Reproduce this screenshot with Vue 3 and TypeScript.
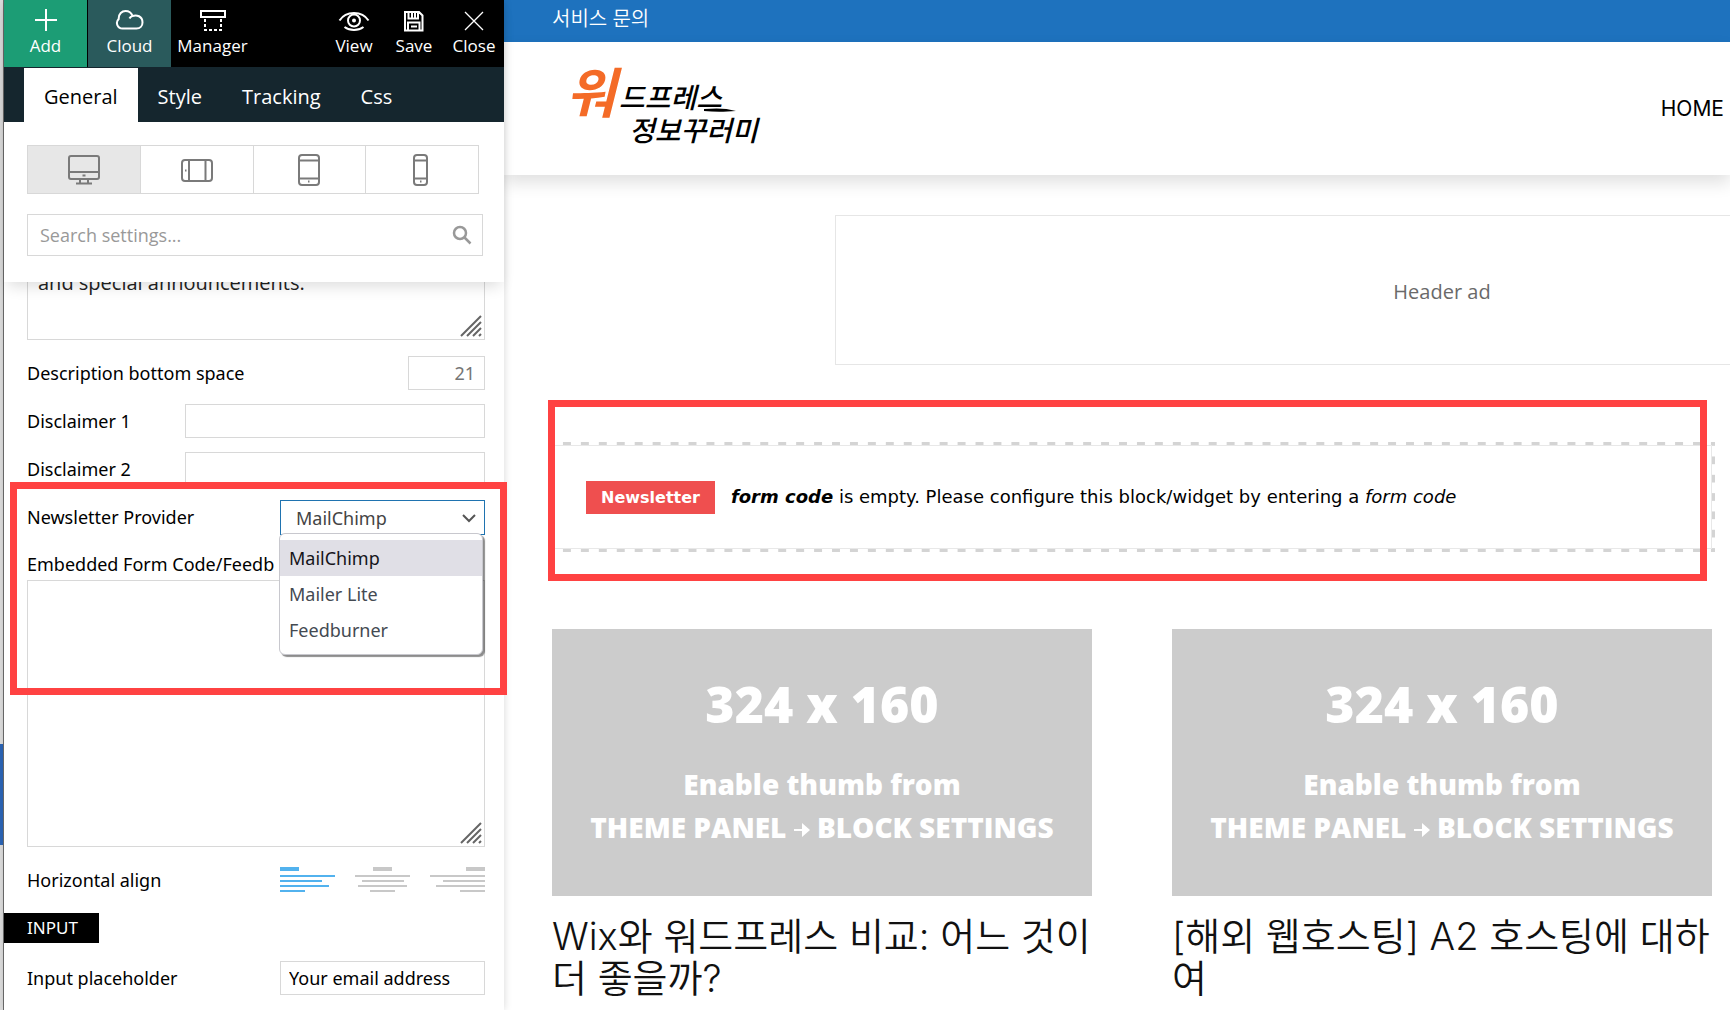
<script setup lang="ts">
import { ref } from 'vue'

const tabs = ['General', 'Style', 'Tracking', 'Css']
const activeTab = ref('General')

const devices = ['Desktop', 'Tablet landscape', 'Tablet portrait', 'Phone']
const activeDevice = ref('Desktop')

const providers = ['MailChimp', 'Mailer Lite', 'Feedburner']
const provider = ref('MailChimp')

const alignments = ['left', 'center', 'right']
const align = ref('left')
const alignWidths = [19, 55, 42, 49, 25]
const alignTops = [0, 8, 13, 18, 23]

function barX(side: string, width: number): number {
  if (side === 'left') return 0
  return side === 'right' ? 55 - width : Math.round((55 - width) / 2)
}

const description = ref('and special announcements.')
const formCode = ref('')
const search = ref('')
const disclaimer1 = ref('')
const disclaimer2 = ref('')
const placeholderText = ref('Your email address')

const posts: string[] = [
  'Wix와 워드프레스 비교: 어느 것이 더 좋을까?',
  '[해외 웹호스팅] A2 호스팅에 대하여',
]
</script>

<template>
  <div class="screen">
    <div class="edge"></div>

    <aside class="panel">
      <div class="panel-head">
        <div class="toolbar">
          <button type="button" class="tool wide add">
            <svg width="24" height="24" viewBox="0 0 24 24"><path d="M12 1v22M1 12h22" /></svg>
            <span>Add</span>
          </button>
          <button type="button" class="tool wide cloud">
            <svg width="30" height="24" viewBox="0 0 30 24">
              <path d="M7.500 20.500a5.500 5.500 0 0 1-3.800-9.500C3.500 5.500 7 3 10.500 3c3.500 0 6 2 7 5 4-1.500 10 0 10 6.500 0 3.500-2.500 6-6 6zM17.500 8c-1.500.5-2.500 1.300-3 2.500" />
            </svg>
            <span>Cloud</span>
          </button>
          <button type="button" class="tool wide">
            <svg width="28" height="24" viewBox="0 0 28 24">
              <path d="M2 3h24v6H2z" />
              <path d="M6 11v11h16V11" stroke-dasharray="3 2" />
            </svg>
            <span>Manager</span>
          </button>
          <div class="tool-group">
            <button type="button" class="tool">
              <svg width="32" height="24" viewBox="0 0 32 24">
                <path d="M1.500 12.500C8 2.500 24 2.500 30.500 12.500M6.500 19c5.500 4 13.500 4 19 0" />
                <circle cx="16" cy="12.500" r="6" />
                <circle cx="16" cy="12.500" r="2" fill="#fff" stroke="none" />
              </svg>
              <span>View</span>
            </button>
            <button type="button" class="tool">
              <svg width="22" height="24" viewBox="0 0 22 24">
                <path d="M2 4h14l3.500 3.500V22.500H2zM5.500 4v6.500h9.500V4M9 4v6M12 4v6M5 22v-7.500h11.500V22M8 18.500h6" />
              </svg>
              <span>Save</span>
            </button>
            <button type="button" class="tool">
              <svg width="22" height="24" viewBox="0 0 22 24"><path d="M2 4l18 18M20 4L2 22" stroke-width="1.300" /></svg>
              <span>Close</span>
            </button>
          </div>
        </div>

        <nav class="tabs">
          <button
            v-for="tab in tabs"
            :key="tab"
            type="button"
            class="tab"
            :class="{ active: tab === activeTab }"
            @click="activeTab = tab"
          >{{ tab }}</button>
        </nav>

        <div class="devices">
          <button
            v-for="(device, i) in devices"
            :key="device"
            type="button"
            class="device"
            :class="{ active: device === activeDevice }"
            :aria-label="device"
            @click="activeDevice = device"
          >
            <svg v-if="i === 0" width="32" height="30" viewBox="0 0 32 30">
              <rect x="1" y="1" width="30" height="23" rx="2" />
              <path d="M1 17h30M12 24v4M20 24v4M8 28.500h16M14.500 20.500h3" />
            </svg>
            <svg v-else-if="i === 1" width="34" height="24" viewBox="0 0 34 24">
              <rect x="2" y="2" width="30" height="21" rx="3" />
              <path d="M9 2v21M25.500 2v21M5 12.500h1.500" />
            </svg>
            <svg v-else-if="i === 2" width="22" height="32" viewBox="0 0 22 32">
              <rect x="1" y="1" width="20" height="30" rx="3" />
              <path d="M1 6.500h20M1 24.500h20M10 27.500h1.500" />
            </svg>
            <svg v-else width="18" height="32" viewBox="0 0 18 32">
              <rect x="1" y="1" width="13" height="30" rx="3" />
              <path d="M1 6.500h13M1 24.500h13M7 27.500h1.500" />
            </svg>
          </button>
        </div>

        <div class="search">
          <input v-model="search" type="text" placeholder="Search settings..." aria-label="Search settings" />
          <svg width="20" height="20" viewBox="0 0 20 20">
            <circle cx="8" cy="8" r="6" />
            <path d="M12.500 12.500L18.500 18.500" />
          </svg>
        </div>
      </div>

      <div class="settings">
        <div class="area description">
          <textarea v-model="description" aria-label="Description"></textarea>
          <svg class="grip" width="22" height="22" viewBox="0 0 22 22">
            <path d="M1 21L21 1M7 21L21 7M13 21l8-8M19 21l2-2" />
          </svg>
        </div>

        <div class="row">
          <label for="space">Description bottom space</label>
          <input id="space" class="field tiny" type="text" placeholder="21" />
        </div>
        <div class="row">
          <label for="d1">Disclaimer 1</label>
          <input id="d1" v-model="disclaimer1" class="field long" type="text" />
        </div>
        <div class="row">
          <label for="d2">Disclaimer 2</label>
          <input id="d2" v-model="disclaimer2" class="field long" type="text" />
        </div>

        <div class="provider">
          <div class="row">
            <label for="provider">Newsletter Provider</label>
            <div class="picker">
              <select id="provider" v-model="provider">
                <option v-for="name in providers" :key="name">{{ name }}</option>
              </select>
              <svg class="chevron" width="14" height="9" viewBox="0 0 14 9"><path d="M1 1l6 6 6-6" /></svg>
              <ul class="menu" role="listbox" aria-label="Newsletter Provider">
                <li
                  v-for="name in providers"
                  :key="name"
                  role="option"
                  :aria-selected="name === provider"
                  :class="{ chosen: name === provider }"
                  @click="provider = name"
                >{{ name }}</li>
              </ul>
            </div>
          </div>
          <label class="code-label" for="code">Embedded Form Code/Feedb</label>
          <div class="area code">
            <textarea id="code" v-model="formCode"></textarea>
            <svg class="grip" width="22" height="22" viewBox="0 0 22 22">
              <path d="M1 21L21 1M7 21L21 7M13 21l8-8M19 21l2-2" />
            </svg>
          </div>
          <div class="marker"></div>
        </div>

        <div class="row align-row">
          <span>Horizontal align</span>
          <div class="aligns">
            <button
              v-for="side in alignments"
              :key="side"
              type="button"
              :class="{ on: side === align }"
              :aria-label="'Align ' + side"
              @click="align = side"
            >
              <svg width="55" height="26" viewBox="0 0 55 26">
                <rect
                  v-for="(w, i) in alignWidths"
                  :key="i"
                  :x="barX(side, w)"
                  :y="alignTops[i]"
                  :width="w"
                  :height="i === 0 ? 4 : 2"
                />
              </svg>
            </button>
          </div>
        </div>

        <h3 class="section">INPUT</h3>

        <div class="row">
          <label for="ph">Input placeholder</label>
          <input id="ph" v-model="placeholderText" class="field medium" type="text" />
        </div>
      </div>
    </aside>

    <main class="site">
      <div class="topbar"><a href="#">서비스 문의</a></div>

      <header class="site-head">
        <a href="#" class="logo" aria-label="워드프레스 정보꾸러미">
          <svg width="200" height="120" viewBox="0 0 200 120">
            <text x="2" y="64" class="brush orange">워</text>
            <text x="55" y="59" class="brush word">드프레스</text>
            <text x="65" y="92" class="brush word">정보꾸러미</text>
            <path d="M140 60c12-1 22-1 32 2-12 1-22 1-32 0z" />
          </svg>
        </a>
        <a href="#" class="home">HOME</a>
      </header>

      <div class="ad-row">
        <div class="ad">Header ad</div>
      </div>

      <section class="notice">
        <span class="badge">Newsletter</span>
        <p><b><i>form code</i></b> is empty. Please configure this block/widget by entering a <i>form code</i></p>
        <div class="marker"></div>
      </section>

      <section class="posts">
        <article v-for="title in posts" :key="title">
          <div class="thumb">
            <strong>324 x 160</strong>
            <span>Enable thumb from</span>
            <span class="path">
              THEME PANEL
              <svg width="16" height="16" viewBox="0 0 16 16"><path d="M0 7h8V1l8 7-8 7V9H0z" /></svg>
              BLOCK SETTINGS
            </span>
          </div>
          <h2><a href="#">{{ title }}</a></h2>
        </article>
      </section>
    </main>
  </div>
</template>

<style>
body {
  overflow: hidden;
}
</style>

<style scoped>
* {
  box-sizing: border-box;
}
.screen {
  display: grid;
  grid-template-columns: 4px 500px minmax(0, 1fr);
  height: 100vh;
  overflow: hidden;
  background: #fff;
  font-family: 'Open Sans', 'Noto Sans CJK KR', sans-serif;
  font-size: 18px;
  line-height: 24px;
  color: #000;
}
button {
  margin: 0;
  padding: 0;
  border: 0;
  background: none;
  font: inherit;
  color: inherit;
}
a {
  color: inherit;
  text-decoration: none;
}
.edge {
  border-right: 1px solid #6e6e6e;
  background: linear-gradient(#dedede 744px, #2c66b8 744px, #2c66b8 845px, #dedede 845px);
}

/* Settings panel */
.panel {
  position: relative;
  z-index: 2;
  background: #fff;
  box-shadow: 0 0 8px rgba(0, 0, 0, 0.16);
}
.panel-head {
  position: relative;
  z-index: 1;
  padding-bottom: 26px;
  background: #fff;
  box-shadow: 0 8px 14px -4px rgba(0, 0, 0, 0.14);
}
.toolbar {
  display: flex;
  height: 67px;
  background: #000;
  color: #fff;
  font-size: 17px;
  line-height: 22px;
}
.tool {
  display: flex;
  flex-direction: column;
  align-items: center;
  gap: 3px;
  width: 60px;
  padding-top: 8px;
}
.tool.wide {
  width: 83px;
}
.tool.add {
  margin-right: 1px;
  background: #1c9d75;
}
.tool.cloud {
  background: #2a5a5c;
}
.tool svg {
  fill: none;
  stroke: #fff;
  stroke-width: 2;
}
.tool-group {
  display: flex;
  margin-left: auto;
}
.tabs {
  display: flex;
  padding: 1px 0 0 20px;
  background: #15262e;
  color: #fff;
  font-size: 20px;
  line-height: 50px;
}
.tab {
  padding: 4px 20px 0;
}
.tab.active {
  background: #fff;
  color: #000;
}
.devices {
  display: flex;
  margin: 23px 25px 0 23px;
  border: 1px solid #d8d8d8;
}
.device {
  display: flex;
  flex: 1;
  align-items: center;
  justify-content: center;
  height: 47px;
}
.device + .device {
  border-left: 1px solid #d8d8d8;
}
.device.active {
  background: #e7e7e7;
}
.device svg {
  fill: none;
  stroke: #7a7a7a;
  stroke-width: 2;
}
.search {
  display: flex;
  align-items: center;
  height: 42px;
  margin: 20px 21px 0 23px;
  padding: 0 10px 0 12px;
  border: 1px solid #d8d8d8;
}
.search input {
  flex: 1;
  min-width: 0;
  padding: 0;
  border: 0;
  outline: 0;
  background: none;
  font: inherit;
}
.search input::placeholder {
  color: #999;
}
.search svg {
  fill: none;
  stroke: #999;
  stroke-width: 2.5;
}
.settings {
  padding: 0 19px 0 23px;
  font-family: 'Noto Sans', sans-serif;
}
.area {
  position: relative;
  border: 1px solid #d8d8d8;
}
.area textarea {
  display: block;
  width: 100%;
  height: 100%;
  padding: 16px 10px;
  border: 0;
  outline: 0;
  resize: none;
  background: none;
  font-family: 'Open Sans', sans-serif;
  font-size: 20px;
  line-height: 28px;
  color: #222;
}
.description {
  height: 88px;
  margin: -30px 0 16px;
}
.code {
  height: 267px;
}
.grip {
  position: absolute;
  right: 2px;
  bottom: 2px;
  fill: none;
  stroke: #666;
  stroke-width: 2;
}
.row {
  display: flex;
  align-items: center;
  justify-content: space-between;
  height: 34px;
  margin-bottom: 14px;
}
.field {
  height: 34px;
  padding: 0 9px;
  border: 1px solid #d8d8d8;
  border-radius: 0;
  outline: 0;
  background: #fff;
  font: inherit;
  color: #000;
}
.field::placeholder {
  color: #757575;
}
.tiny {
  width: 77px;
  text-align: right;
}
.long {
  width: 300px;
}
.medium {
  width: 205px;
  padding: 0 8px;
}
.provider {
  position: relative;
}
.picker {
  position: relative;
  align-self: flex-start;
  width: 205px;
}
.picker select {
  display: block;
  width: 100%;
  height: 35px;
  padding: 0 15px;
  border: 1px solid #1f73b0;
  border-radius: 0;
  outline: 0;
  appearance: none;
  background: #fff;
  font: inherit;
  color: #444;
}
.chevron {
  position: absolute;
  top: 14px;
  right: 9px;
  fill: none;
  stroke: #555;
  stroke-width: 2;
  pointer-events: none;
}
.menu {
  position: absolute;
  z-index: 1;
  top: 33px;
  left: -1px;
  right: 2px;
  margin: 0;
  padding: 6px 0;
  border: 1px solid #c8c8ce;
  border-radius: 6px;
  background: #fff;
  box-shadow: 2px 2px 1px rgba(0, 0, 0, 0.45);
  list-style: none;
  line-height: 36px;
  color: #444a52;
}
.menu li {
  padding: 0 9px;
}
.menu .chosen {
  background: #e0dfe6;
  color: #15141a;
}
.code-label {
  display: block;
  height: 32px;
  white-space: nowrap;
  line-height: 32px;
}
.marker {
  position: absolute;
  border: 7px solid #ff4242;
  pointer-events: none;
}
.provider .marker {
  top: -18px;
  right: -22px;
  bottom: 152px;
  left: -17px;
}
.align-row {
  margin: 16px 0;
}
.aligns {
  display: flex;
  justify-content: space-between;
  width: 205px;
}
.aligns button {
  display: block;
  height: 26px;
}
.aligns svg {
  display: block;
  fill: #c8c8c8;
}
.aligns .on svg {
  fill: #52b2ee;
}
.section {
  width: 95px;
  margin: 0 0 18px -23px;
  padding-left: 23px;
  background: #000;
  font-size: 17px;
  font-weight: 400;
  line-height: 30px;
  color: #fff;
}

/* Site preview */
.site {
  min-width: 0;
  overflow: hidden;
}
.topbar {
  height: 42px;
  padding-left: 48px;
  background: #1e72be;
  font-size: 20px;
  font-weight: 350;
  line-height: 38px;
  color: #fff;
}
.site-head {
  display: flex;
  align-items: center;
  justify-content: space-between;
  height: 133px;
  padding: 0 6px 0 60px;
  box-shadow: 0 8px 16px rgba(0, 0, 0, 0.12);
}
.logo svg {
  display: block;
}
.brush {
  font-family: 'Noto Sans CJK KR', sans-serif;
  font-style: italic;
  font-weight: 500;
}
.brush.word {
  font-size: 28px;
}
.brush.orange {
  fill: #f46b27;
  font-size: 54px;
  font-weight: 700;
}
.home {
  font-family: Inter, sans-serif;
  font-size: 21px;
}
.ad-row {
  display: flex;
  padding: 40px 0 0 331px;
}
.ad {
  flex: none;
  width: 1214px;
  height: 150px;
  border: 1px solid #e6e6e6;
  font-size: 20px;
  line-height: 152px;
  text-align: center;
  color: #6a6a6a;
}
.notice {
  position: relative;
  display: flex;
  align-items: center;
  gap: 16px;
  height: 104px;
  margin: 80px 18px 0 48px;
  padding-left: 33px;
  border: 1px solid #e8e8e8;
  font-family: 'DejaVu Sans', sans-serif;
}
.notice::before {
  content: '';
  position: absolute;
  inset: -4px;
  --x: linear-gradient(90deg, #d4d4d4 4px, transparent 4px, transparent 14px, #d4d4d4 14px);
  --y: linear-gradient(#d4d4d4 4px, transparent 4px, transparent 14px, #d4d4d4 14px);
  background: var(--x) 0 0 / 18px 3px, var(--x) 0 100% / 18px 3px, var(--y) 0 0 / 3px 18px,
    var(--y) 100% 0 / 3px 18px;
  background-repeat: round no-repeat, round no-repeat, no-repeat round, no-repeat round;
}
.notice p {
  margin: 0;
  font-size: 18px;
  white-space: nowrap;
}
.badge {
  padding: 0 15px;
  background: #ef4f4f;
  font-size: 16px;
  font-weight: 700;
  line-height: 33px;
  color: #fff;
}
.notice .marker {
  inset: -46px 4px -33px -5px;
}
.posts {
  display: grid;
  grid-template-columns: 1fr 1fr;
  gap: 80px;
  margin: 80px 18px 0 48px;
}
.thumb {
  display: flex;
  flex-direction: column;
  align-items: center;
  height: 267px;
  padding-top: 40px;
  background: #ccc;
  font-size: 28px;
  font-weight: 800;
  line-height: 43px;
  color: #fff;
  white-space: nowrap;
}
.thumb strong {
  margin-bottom: 24px;
  font-size: 50px;
  font-weight: 800;
  line-height: 70px;
}
.path svg {
  fill: #fff;
}
h2 {
  margin: 19px 0 0;
  font-family: Inter, 'Noto Sans CJK KR', sans-serif;
  font-size: 38px;
  font-weight: 350;
  line-height: 42px;
  color: #111;
  word-break: break-all;
}
</style>
